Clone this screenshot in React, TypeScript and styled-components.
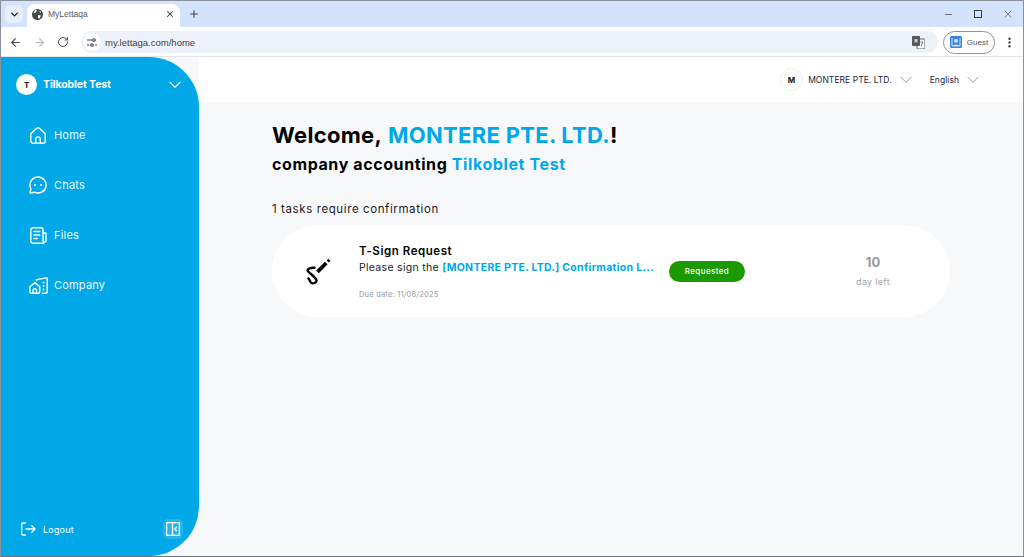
import React from 'react';
import styled, { createGlobalStyle } from 'styled-components';
import { ArrowLeft, ArrowRight, RotateCw, X, Plus, ChevronDown, Minus, EllipsisVertical } from 'lucide-react';

const BRAND = '#00a8e8';
const FONT = 'Inter, "Open Sans", sans-serif';

const GlobalStyle = createGlobalStyle`
  html, body { margin: 0; padding: 0; height: 100%; overflow: hidden; }
  * { box-sizing: border-box; }
  body { font-family: ${FONT}; }
`;

const Chevron = ({ size = 16, weight = 1, color = 'currentColor' }: { size?: number; weight?: number; color?: string }) => (
  <svg width={size} height={size * 0.6} viewBox="0 0 20 12" fill="none" stroke={color} strokeWidth={weight}>
    <path d="M1 1.5 10 10.5 19 1.5" />
  </svg>
);

const HomeIcon = () => (
  <svg width="16" height="17" viewBox="0 0 16 17" fill="none" stroke="#fff" strokeWidth="1.4" strokeLinejoin="round">
    <path d="M.8 6.800 6.700 1.300a2 2 0 0 1 2.600 0l5.900 5.500v7.400a2 2 0 0 1-2 2H2.800a2 2 0 0 1-2-2z" />
    <path d="M5.700 16.200v-4a2.300 2.300 0 0 1 4.600 0v4" />
  </svg>
);
const ChatIcon = () => (
  <svg width="18" height="18" viewBox="0 0 18 18" fill="none" stroke="#fff" strokeWidth="1.4" strokeLinejoin="round">
    <path d="M9 1a8 8 0 1 1-3.400 15.200L1 17l.9-4.300A8 8 0 0 1 9 1z" />
    <circle cx="6" cy="9" r="1" fill="#fff" stroke="none" />
    <circle cx="12" cy="9" r="1" fill="#fff" stroke="none" />
  </svg>
);
const FilesIcon = () => (
  <svg width="17" height="17" viewBox="0 0 17 17" fill="none" stroke="#fff" strokeWidth="1.4" strokeLinejoin="round" strokeLinecap="round">
    <path d="M14 16.200H2.800a2 2 0 0 1-2-2V2.800a2 2 0 0 1 2-2h8.200a2 2 0 0 1 2 2v11.400a2 2 0 0 0 3 0V6h-3" />
    <path d="M3.800 4.500h6M3.800 8h6M3.800 11.500h3.500" />
  </svg>
);
const CompanyIcon = () => (
  <svg width="19" height="17" viewBox="0 0 19 17" fill="none" stroke="#fff" strokeWidth="1.4" strokeLinejoin="round" strokeLinecap="round">
    <path d="M.8 9.800 5.800 5.800l5 4v5a1.500 1.500 0 0 1-1.500 1.500h-7A1.500 1.500 0 0 1 .8 14.800z" />
    <path d="M4 16.300v-2.800a1.800 1.800 0 0 1 3.600 0v2.800" />
    <path d="M7.500 3.800V2.800L17 .9a1 1 0 0 1 1.200 1V14.800a1.500 1.500 0 0 1-1.500 1.500H13.500" />
    <path d="M14.500 5.500h.1M14.500 9h.1M14.500 12.500h.1" strokeWidth="1.800" />
  </svg>
);
const LogoutIcon = () => (
  <svg width="15" height="14" viewBox="0 0 15 14" fill="none" stroke="#fff" strokeWidth="1.300" strokeLinecap="round" strokeLinejoin="round">
    <path d="M4.500 1H1.700a1 1 0 0 0-1 1v10a1 1 0 0 0 1 1h2.800" />
    <path d="M5 7h9M10.800 3.800 14 7l-3.200 3.200" />
  </svg>
);
const CollapseIcon = () => (
  <svg width="14" height="14" viewBox="0 0 14 14" fill="none" stroke="#fff" strokeWidth="1.300" strokeLinejoin="round" strokeLinecap="round">
    <rect x=".6" y=".6" width="12.800" height="12.800" rx="1" />
    <path d="M6.500.6v12.800M10.500 5.300 8.800 7l1.700 1.700" />
  </svg>
);
const SignIcon = () => (
  <svg width="26" height="27" viewBox="0 0 26 27" fill="none" stroke="#000" strokeLinecap="round">
    <path d="M12.500 13.800 21.200 5" strokeWidth="3.800" strokeLinecap="butt" />
    <path d="M22.800 3.500 24.400 1.900" strokeWidth="3" strokeLinecap="butt" />
    <path d="M9.500 9.800C6 9.500 2.200 10.500 2.600 12.500c.5 2.400 8.400 6.200 8.900 10 .3 2.300-3.600 3.600-5.200 2.400-1.200-.9-1.500-2.800-2.800-4.400" strokeWidth="2.400" />
  </svg>
);
const GlobeIcon = () => (
  <svg width="11" height="11" viewBox="0 0 11 11">
    <circle cx="5.500" cy="5.500" r="5.500" fill="#45494e" />
    <path d="M1.500 4.200 4 3.200 5 1.200 3 1zM6 6l3 .5-1.500 3L6 9zM7 2l2 .5-.5 1.500z" fill="#fff" />
  </svg>
);
const SiteIcon = () => (
  <svg width="10" height="9" viewBox="0 0 10 9" fill="none" stroke="#3c4043" strokeWidth="1.100">
    <path d="M0 2h5M0 7h2.500M8 7h2" />
    <circle cx="7" cy="2" r="1.300" />
    <circle cx="5" cy="7" r="1.300" />
  </svg>
);
const TranslateIcon = () => (
  <svg width="13" height="13" viewBox="0 0 13 13">
    <rect x="5" y="3" width="8" height="10" rx="1" fill="#fff" stroke="#5f6368" strokeWidth="1" />
    <rect x="0" y="0" width="8" height="10" rx="1" fill="#55595e" />
    <rect x="2.500" y="3" width="3" height="3.500" fill="#c4c7cb" />
    <path d="M8.500 6h2.500l-2 4" fill="none" stroke="#5f6368" strokeWidth=".9" />
  </svg>
);
const ProfileIcon = () => (
  <svg width="12" height="12" viewBox="0 0 12 12">
    <rect width="12" height="12" rx="1.500" fill="#3b82e0" />
    <circle cx="6" cy="4.800" r="2" fill="#cfe2fb" />
    <path d="M2 2v8h8V2" fill="none" stroke="#fff" strokeWidth=".8" />
    <path d="M3 10c.5-2 5.500-2 6 0" fill="#cfe2fb" />
  </svg>
);

const Window = styled.div`
  width: 1024px;
  height: 557px;
  display: flex;
  flex-direction: column;
  border: 1px solid #8b919a;
  border-bottom-color: #6f747b;
  overflow: hidden;
  background: #fff;
`;

const TabStrip = styled.div`
  height: 26px;
  flex: none;
  background: #d3e3fd;
  display: flex;
  align-items: flex-end;
  padding-left: 4px;
`;

const TabSearch = styled.div`
  width: 18px;
  height: 18px;
  margin: 0 4px 4px 0;
  border-radius: 5px;
  background: #e6eefc;
  display: flex;
  align-items: center;
  justify-content: center;
  color: #1f1f1f;
`;

const Tab = styled.div`
  width: 153px;
  height: 23px;
  background: #fff;
  border-radius: 8px 8px 0 0;
  display: flex;
  align-items: center;
  padding: 0 5px 3px 5px;
  font-family: "Liberation Sans", Arial, sans-serif;
  font-size: 8.500px;
  color: #55595e;
`;

const TabTitle = styled.span`
  flex: 1;
  margin-left: 5px;
`;

const NewTab = styled.div`
  margin: 0 0 4px 8px;
  height: 18px;
  display: flex;
  align-items: center;
  color: #3c4043;
`;

const WindowControls = styled.div`
  margin-left: auto;
  height: 26px;
  display: flex;
  align-items: center;
  gap: 18px;
  padding-right: 9px;
  color: #3a3f45;
`;

const ControlSlot = styled.div`
  width: 12px;
  display: flex;
  justify-content: center;
`;

const MaximizeBox = styled.div`
  width: 8px;
  height: 8px;
  border: 1px solid #3a3f45;
`;

const Toolbar = styled.div`
  height: 30px;
  flex: none;
  background: #fff;
  border-bottom: 1px solid #e3e5e8;
  display: flex;
  align-items: center;
  padding: 1px 7px 0 8px;
  color: #45494e;
`;

const NavButton = styled.div<{ $dim?: boolean }>`
  width: 24px;
  display: flex;
  color: ${p => (p.$dim ? '#b4b7bb' : '#45494e')};
`;

const Omnibox = styled.div`
  flex: 1;
  height: 22px;
  background: #edf2fa;
  border-radius: 11px;
  display: flex;
  align-items: center;
  font-family: "Liberation Sans", Arial, sans-serif;
  font-size: 9.500px;
  color: #3c4043;
  padding-right: 13px;
`;

const SiteBadge = styled.div`
  width: 18px;
  height: 18px;
  margin: 0 4px 0 2px;
  border-radius: 50%;
  background: #fff;
  display: flex;
  align-items: center;
  justify-content: center;
`;

const Url = styled.span`
  flex: 1;
`;

const GuestPill = styled.div`
  width: 52px;
  height: 23px;
  margin: 0 8px 0 5px;
  border: 1px solid #8e9298;
  border-radius: 12px;
  display: flex;
  align-items: center;
  justify-content: center;
  gap: 5px;
  font-family: "Liberation Sans", Arial, sans-serif;
  font-size: 8px;
  color: #55595e;
`;

const Page = styled.div`
  flex: 1;
  min-height: 0;
  display: flex;
  background: #f7f8fa;
`;

const Sidebar = styled.aside`
  width: 198px;
  flex: none;
  background: ${BRAND};
  border-radius: 0 50px 50px 0;
  display: flex;
  flex-direction: column;
  color: #fff;
  padding: 17px 18px 17px 15px;
`;

const Account = styled.div`
  display: flex;
  align-items: center;
  gap: 6px;
  font-size: 10.500px;
  font-weight: 700;
  letter-spacing: -0.1px;
  height: 21px;
`;

const Avatar = styled.div`
  width: 21px;
  height: 21px;
  border-radius: 50%;
  background: #fff;
  color: #1a1a1a;
  font-size: 8px;
  font-weight: 700;
  display: flex;
  align-items: center;
  justify-content: center;
`;

const AccountName = styled.span`
  flex: 1;
`;

const Menu = styled.nav`
  margin-top: 28px;
  display: flex;
  flex-direction: column;
  gap: 26px;
  padding-left: 12px;
  flex: 1;
`;

const MenuItem = styled.a`
  height: 24px;
  display: flex;
  align-items: center;
  gap: 6px;
  font-size: 11px;
  font-weight: 400;
  letter-spacing: 0.2px;
  color: #eafaff;
`;

const MenuIconBox = styled.span`
  width: 20px;
  display: flex;
  justify-content: center;
`;

const SidebarFooter = styled.div`
  display: flex;
  align-items: center;
  justify-content: space-between;
  padding-left: 5px;
  margin-right: -2px;
`;

const Logout = styled.div`
  display: flex;
  align-items: center;
  gap: 7px;
  font-size: 9px;
  letter-spacing: 0.2px;
`;

const CollapseButton = styled.div`
  width: 20px;
  height: 20px;
  border-radius: 5px;
  background: rgba(255, 255, 255, 0.15);
  display: flex;
  align-items: center;
  justify-content: center;
`;

const Main = styled.main`
  flex: 1;
  min-width: 0;
  display: flex;
  flex-direction: column;
`;

const TopBar = styled.header`
  height: 45px;
  flex: none;
  background: #fff;
  display: flex;
  align-items: center;
  justify-content: flex-end;
  padding-right: 44px;
  font-size: 8.500px;
  letter-spacing: 0.05px;
  color: #1d2433;
`;

const CompanyBadge = styled.div`
  width: 23px;
  height: 23px;
  border-radius: 50%;
  border: 1px solid #eceef1;
  font-size: 8px;
  font-weight: 700;
  color: #111;
  display: flex;
  align-items: center;
  justify-content: center;
  margin-right: 5px;
`;

const TopItem = styled.div<{ $gap: number }>`
  display: flex;
  align-items: center;
  gap: 8px;
  margin-right: ${p => p.$gap}px;
  color: #555;
  span { color: #1d2433; }
`;

const Content = styled.div`
  padding: 20px 73px 0 73px;
`;

const Welcome = styled.h1`
  margin: 0;
  font-size: 22px;
  line-height: 27px;
  font-weight: 700;
  letter-spacing: 0.3px;
  word-spacing: 1px;
  color: #000;
`;

const Accent = styled.span`
  color: ${BRAND};
  word-spacing: 0;
`;

const Subtitle = styled.h2`
  margin: 5px 0 0;
  font-size: 16px;
  line-height: 20px;
  font-weight: 700;
  letter-spacing: 0.6px;
  color: #000;
`;

const TaskCount = styled.p`
  margin: 27px 0 0;
  font-size: 11.500px;
  line-height: 16px;
  letter-spacing: 0.6px;
  color: #1a1a1a;
`;

const TaskCard = styled.section`
  margin-top: 8px;
  height: 92px;
  background: #fff;
  border-radius: 46px;
  display: flex;
  align-items: center;
  padding-left: 33px;
`;

const TaskIcon = styled.div`
  width: 26px;
  flex: none;
  display: flex;
  margin-right: 28px;
`;

const TaskBody = styled.div`
  width: 298px;
  flex: none;
  display: flex;
  flex-direction: column;
  padding-top: 2px;
`;

const TaskTitle = styled.div`
  font-size: 11.500px;
  font-weight: 600;
  line-height: 14px;
  letter-spacing: 0.55px;
  color: #000;
`;

const TaskText = styled.div`
  margin-top: 2px;
  font-size: 10.500px;
  line-height: 15px;
  letter-spacing: 0.3px;
  color: #222;
  white-space: nowrap;
`;

const TaskLink = styled.span`
  color: ${BRAND};
  font-weight: 700;
`;

const DueDate = styled.div`
  margin-top: 15px;
  font-size: 7.500px;
  line-height: 10px;
  letter-spacing: 0.2px;
  color: #9a9a9a;
`;

const StatusPill = styled.div`
  width: 76px;
  height: 21px;
  margin: 0 0 0 12px;
  flex: none;
  border-radius: 11px;
  background: #1b9a00;
  color: #fff;
  font-size: 8px;
  font-weight: 500;
  letter-spacing: 0.4px;
  display: flex;
  align-items: center;
  justify-content: center;
`;

const Deadline = styled.div`
  margin-left: 78px;
  width: 100px;
  padding-bottom: 2px;
  display: flex;
  flex-direction: column;
  align-items: center;
  color: #a5a5a5;
`;

const DeadlineValue = styled.div`
  font-size: 13px;
  line-height: 18px;
  font-weight: 700;
  color: #999;
`;

const DeadlineLabel = styled.div`
  margin-top: 5px;
  font-size: 9px;
  line-height: 12px;
  letter-spacing: 0.3px;
`;

const menu = [
  { label: 'Home', icon: <HomeIcon /> },
  { label: 'Chats', icon: <ChatIcon /> },
  { label: 'Files', icon: <FilesIcon /> },
  { label: 'Company', icon: <CompanyIcon /> },
];

export default function App() {
  return (
    <>
      <GlobalStyle />
      <Window>
        <TabStrip>
          <TabSearch><ChevronDown size={11} strokeWidth={3} /></TabSearch>
          <Tab>
            <GlobeIcon />
            <TabTitle>MyLettaqa</TabTitle>
            <X size={10} strokeWidth={2.5} color="#333" />
          </Tab>
          <NewTab><Plus size={12} strokeWidth={2} /></NewTab>
          <WindowControls>
            <ControlSlot><Minus size={11} strokeWidth={1.5} /></ControlSlot>
            <ControlSlot><MaximizeBox /></ControlSlot>
            <ControlSlot><X size={12} strokeWidth={1.2} /></ControlSlot>
          </WindowControls>
        </TabStrip>
        <Toolbar>
          <NavButton><ArrowLeft size={13} strokeWidth={2} /></NavButton>
          <NavButton $dim><ArrowRight size={13} strokeWidth={2} /></NavButton>
          <NavButton><RotateCw size={12} strokeWidth={2} /></NavButton>
          <Omnibox>
            <SiteBadge><SiteIcon /></SiteBadge>
            <Url>my.lettaga.com/home</Url>
            <TranslateIcon />
          </Omnibox>
          <GuestPill><ProfileIcon />Guest</GuestPill>
          <EllipsisVertical size={13} strokeWidth={2.5} color="#3c4043" />
        </Toolbar>
        <Page>
          <Sidebar>
            <Account>
              <Avatar>T</Avatar>
              <AccountName>Tilkoblet Test</AccountName>
              <Chevron size={12} weight={2} color="#fff" />
            </Account>
            <Menu>
              {menu.map(item => (
                <MenuItem key={item.label}>
                  <MenuIconBox>{item.icon}</MenuIconBox>
                  {item.label}
                </MenuItem>
              ))}
            </Menu>
            <SidebarFooter>
              <Logout><LogoutIcon />Logout</Logout>
              <CollapseButton><CollapseIcon /></CollapseButton>
            </SidebarFooter>
          </Sidebar>
          <Main>
            <TopBar>
              <CompanyBadge>M</CompanyBadge>
              <TopItem $gap={18}><span>MONTERE PTE. LTD.</span><Chevron size={12} /></TopItem>
              <TopItem $gap={0}><span>English</span><Chevron size={12} /></TopItem>
            </TopBar>
            <Content>
              <Welcome>Welcome, <Accent>MONTERE PTE. LTD.</Accent>!</Welcome>
              <Subtitle>company accounting <Accent>Tilkoblet Test</Accent></Subtitle>
              <TaskCount>1 tasks require confirmation</TaskCount>
              <TaskCard>
                <TaskIcon><SignIcon /></TaskIcon>
                <TaskBody>
                  <TaskTitle>T-Sign Request</TaskTitle>
                  <TaskText>Please sign the <TaskLink>[MONTERE PTE. LTD.] Confirmation L...</TaskLink></TaskText>
                  <DueDate>Due date: 11/08/2025</DueDate>
                </TaskBody>
                <StatusPill>Requested</StatusPill>
                <Deadline>
                  <DeadlineValue>10</DeadlineValue>
                  <DeadlineLabel>day left</DeadlineLabel>
                </Deadline>
              </TaskCard>
            </Content>
          </Main>
        </Page>
      </Window>
    </>
  );
}
